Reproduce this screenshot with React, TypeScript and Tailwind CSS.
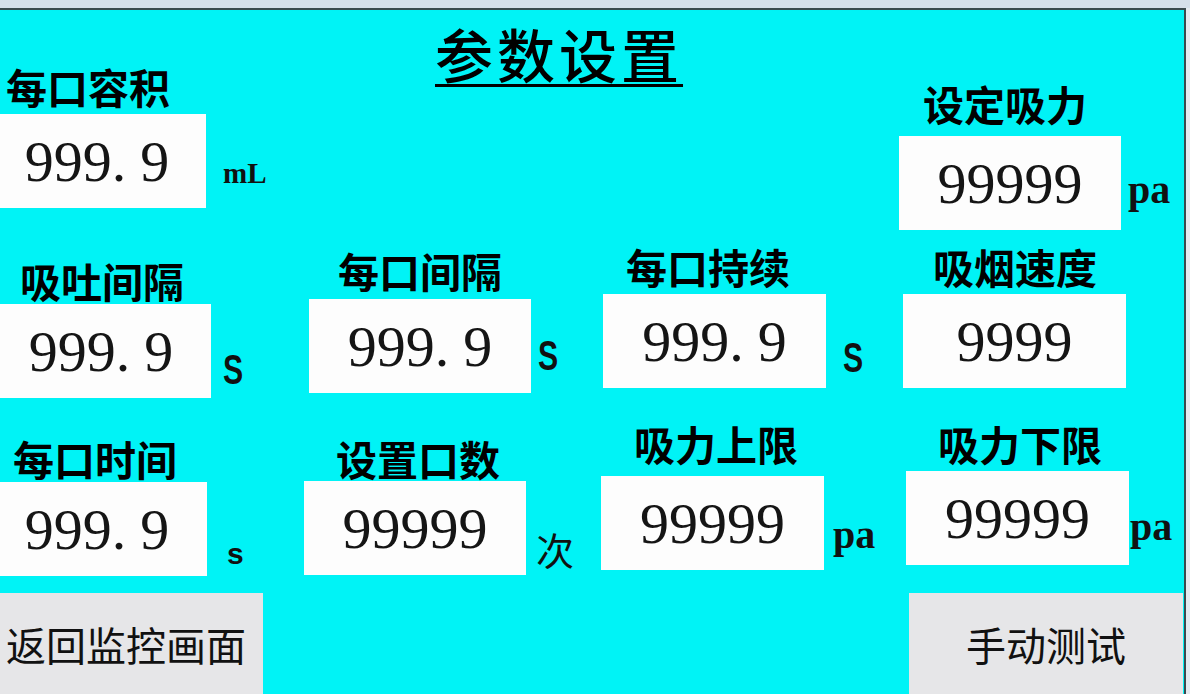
import type { ReactNode } from 'react';

const cjk = "font-['Noto_Sans_CJK_SC',sans-serif]";

function Value({ text }: { text: string }) {
  const [whole, frac] = text.split('.');
  if (frac === undefined) return <>{whole}</>;
  return (
    <>
      {whole}
      <span className="mr-[14px]">.</span>
      {frac}
    </>
  );
}

interface FieldProps {
  label: string;
  value: string;
  unit?: ReactNode;
  labelClass: string;
  rowClass: string;
  boxClass: string;
}

function Field({ label, value, unit, labelClass, rowClass, boxClass }: FieldProps) {
  return (
    <div className="flex flex-col items-start">
      <div className={`whitespace-nowrap text-[41px] font-bold leading-none text-black ${cjk} ${labelClass}`}>
        {label}
      </div>
      <div className={`flex items-end ${rowClass}`}>
        <div
          className={`flex h-[94px] shrink-0 items-center justify-center bg-[#fdfdfd] pt-[2px] font-['Liberation_Serif',serif] text-[58px] leading-none text-[#151515] ${boxClass}`}
        >
          <Value text={value} />
        </div>
        {unit}
      </div>
    </div>
  );
}

const serifUnit = "font-['Liberation_Serif',serif] font-bold leading-none text-[#111]";
const sansS = "inline-block origin-left scale-x-[0.72] font-['Liberation_Sans',sans-serif] text-[42px] font-bold leading-none text-[#111]";

export default function App() {
  return (
    <div className="h-[694px] w-[1190px] overflow-hidden bg-[#e4eaf0]">
      <div className="h-[8px] bg-[#d5dfea]" />
      <div className="flex h-[686px] w-[1186px] flex-col border-t-2 border-r-2 border-[#3a4a4e] bg-[#00f3f6]">
        {/* row 1 */}
        <div className="flex h-[230px] shrink-0">
          <div className="w-[300px] shrink-0">
            <Field
              label="每口容积"
              value="999.9"
              labelClass="mt-[56px] ml-[6px]"
              rowClass="mt-[7px] ml-[-12px]"
              boxClass="w-[218px]"
              unit={<span className={`${serifUnit} ml-[17px] pb-[20px] text-[29px]`}>mL</span>}
            />
          </div>
          <div className="w-[595px] shrink-0">
            <h1
              className={`mt-[14px] ml-[135px] inline-block text-[58px] font-medium leading-none tracking-[4px] text-black underline decoration-[3px] underline-offset-[6px] ${cjk}`}
            >
              参数设置
            </h1>
          </div>
          <div className="flex-1">
            <Field
              label="设定吸力"
              value="99999"
              labelClass="mt-[73px] ml-[28px]"
              rowClass="mt-[12px] ml-[4px]"
              boxClass="w-[222px]"
              unit={<span className={`${serifUnit} ml-[7px] pb-[20px] text-[40px]`}>pa</span>}
            />
          </div>
        </div>

        {/* row 2 */}
        <div className="flex h-[178px] shrink-0">
          <div className="w-[300px] shrink-0">
            <Field
              label="吸吐间隔"
              value="999.9"
              labelClass="mt-[20px] ml-[20px]"
              rowClass="mt-[3px] ml-[-9px]"
              boxClass="w-[220px]"
              unit={<span className={`${sansS} ml-[12px] pb-[7px]`}>S</span>}
            />
          </div>
          <div className="w-[297px] shrink-0">
            <Field
              label="每口间隔"
              value="999.9"
              labelClass="mt-[10px] ml-[38px]"
              rowClass="mt-[8px] ml-[9px]"
              boxClass="w-[222px]"
              unit={<span className={`${sansS} ml-[7px] pb-[16px]`}>S</span>}
            />
          </div>
          <div className="w-[298px] shrink-0">
            <Field
              label="每口持续"
              value="999.9"
              labelClass="mt-[6px] ml-[29px]"
              rowClass="mt-[7px] ml-[6px]"
              boxClass="w-[223px]"
              unit={<span className={`${sansS} ml-[17px] pb-[9px]`}>S</span>}
            />
          </div>
          <div className="flex-1">
            <Field
              label="吸烟速度"
              value="9999"
              labelClass="mt-[6px] ml-[38px]"
              rowClass="mt-[7px] ml-[8px]"
              boxClass="w-[223px]"
            />
          </div>
        </div>

        {/* row 3 */}
        <div className="flex h-[175px] shrink-0">
          <div className="w-[300px] shrink-0">
            <Field
              label="每口时间"
              value="999.9"
              labelClass="mt-[20px] ml-[13px]"
              rowClass="mt-[3px] ml-[-13px]"
              boxClass="w-[220px]"
              unit={
                <span className={`ml-[20px] pb-[7px] font-['Liberation_Sans',sans-serif] text-[30px] font-bold leading-none text-[#111]`}>
                  s
                </span>
              }
            />
          </div>
          <div className="w-[297px] shrink-0">
            <Field
              label="设置口数"
              value="99999"
              labelClass="mt-[20px] ml-[36px]"
              rowClass="mt-[2px] ml-[4px]"
              boxClass="w-[222px]"
              unit={<span className={`ml-[10px] pb-[7px] text-[38px] leading-none text-[#111] ${cjk}`}>次</span>}
            />
          </div>
          <div className="w-[298px] shrink-0">
            <Field
              label="吸力上限"
              value="99999"
              labelClass="mt-[5px] ml-[37px]"
              rowClass="mt-[12px] ml-[4px]"
              boxClass="w-[223px]"
              unit={<span className={`${serifUnit} ml-[9px] pb-[15px] text-[40px]`}>pa</span>}
            />
          </div>
          <div className="flex-1">
            <Field
              label="吸力下限"
              value="99999"
              labelClass="mt-[5px] ml-[43px]"
              rowClass="mt-[7px] ml-[11px]"
              boxClass="w-[223px]"
              unit={<span className={`${serifUnit} ml-[1px] pb-[18px] text-[40px]`}>pa</span>}
            />
          </div>
        </div>

        {/* buttons */}
        <div className="flex flex-1 justify-between">
          <button className={`flex h-full w-[263px] items-center bg-[#e6e6e8] pl-[6px] text-[40px] leading-none text-[#111] ${cjk}`}>
            返回监控画面
          </button>
          <button className={`mr-[1px] flex h-full w-[274px] items-center justify-center bg-[#e6e6e8] text-[40px] leading-none text-[#111] ${cjk}`}>
            手动测试
          </button>
        </div>
      </div>
    </div>
  );
}
